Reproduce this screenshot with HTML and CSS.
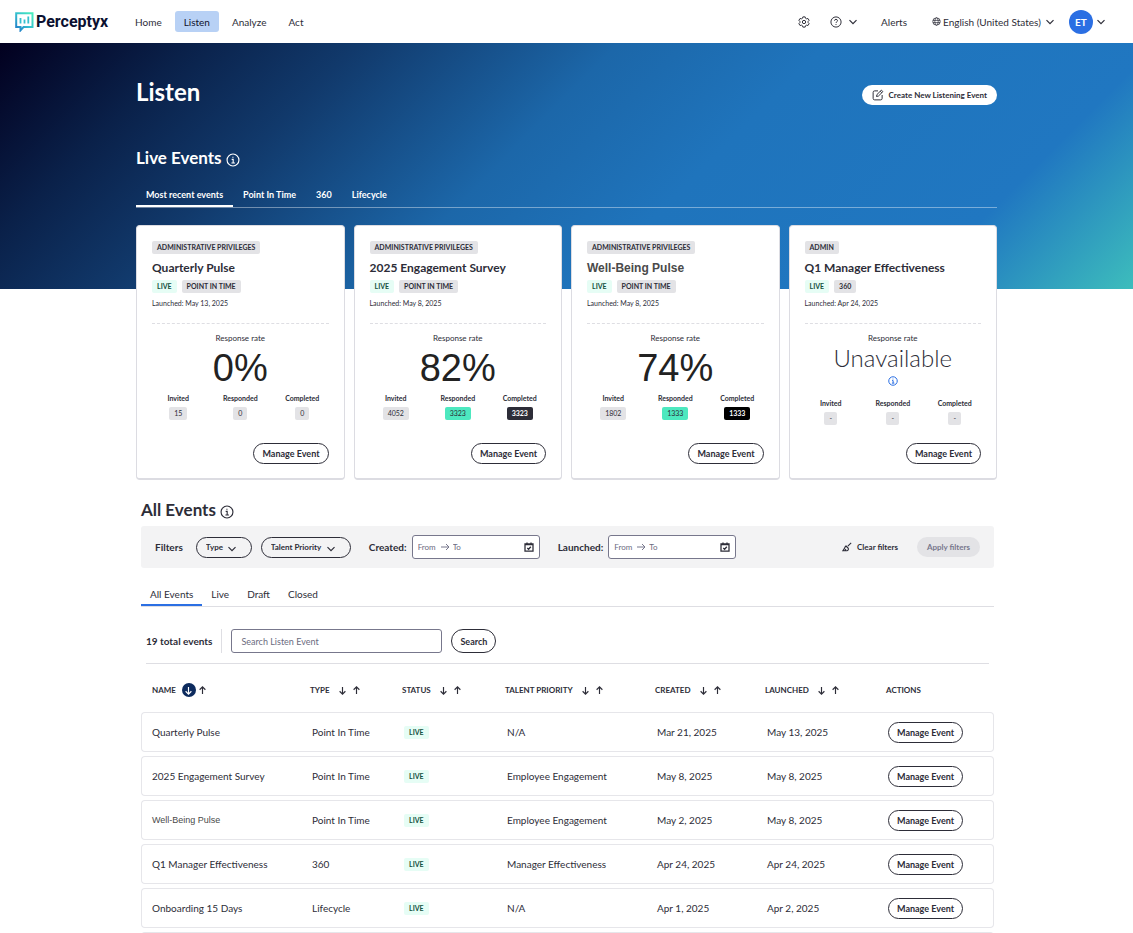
FILE: index.html
```html
<!DOCTYPE html>
<html lang="en">
<head>
    <meta charset="UTF-8">
    <meta name="viewport" content="width=device-width, initial-scale=1.0">
    <title>Perceptyx - Listen</title>
    <link rel="stylesheet" href="styles.css">
</head>
<body>
    <svg class="sprite" aria-hidden="true">
        <symbol id="chevron" viewBox="0 0 10 10"><path d="M1.5 3.2 5 6.7l3.5-3.5"/></symbol>
        <symbol id="info" viewBox="0 0 16 16"><circle cx="8" cy="8" r="6.8"/><path d="M6.5 7.3H8.2v4M6.2 11.4h4M7.9 4.2v1.3"/></symbol>
        <symbol id="arrow-down" viewBox="0 0 10 10"><path d="M5 1v8M1.8 5.8 5 9l3.2-3.2"/></symbol>
        <symbol id="arrow-up" viewBox="0 0 10 10"><path d="M5 9V1M1.8 4.2 5 1l3.2 3.2"/></symbol>
        <symbol id="arrow-right" viewBox="0 0 10 10"><path d="M1 5h8M6 2l3 3-3 3"/></symbol>
        <symbol id="calendar" viewBox="0 0 10 10"><path d="M1 2h8v7.2H1zM1 2.7h8M3 .5V2M7 .5V2M3.3 6l1.3 1.2 2.2-2.5"/></symbol>
    </svg>

    <header class="topbar">
        <a class="logo" href="#">
            <svg class="logo-mark" viewBox="0 0 19 20" aria-hidden="true">
                <defs>
                    <linearGradient id="logoGradient" x1="0" y1="1" x2="1" y2="0">
                        <stop offset="0" stop-color="#1f78c8"/>
                        <stop offset="0.5" stop-color="#35c0cf"/>
                        <stop offset="1" stop-color="#4aeebc"/>
                    </linearGradient>
                </defs>
                <path d="M5 15H1.200V1.300h16.300V15H8.500l-3 3.300V14" fill="none" stroke="url(#logoGradient)" stroke-width="2"/>
                <path d="M5.500 6v5.500M9.500 7.500v4M13.300 4.500v7" fill="none" stroke="#35c0cf" stroke-width="1.800"/>
            </svg>
            <span>Perceptyx</span>
        </a>
        <nav class="main-nav">
            <a href="#">Home</a>
            <a href="#" class="active">Listen</a>
            <a href="#">Analyze</a>
            <a href="#">Act</a>
        </nav>
        <div class="tools">
            <button class="icon-button settings" aria-label="Settings">
                <svg class="icon" viewBox="0 0 16 16"><path d="M6.500 1.200h3l.5 1.800 1.500.8 1.800-.5 1.500 2.500-1.300 1.400v1.600l1.300 1.400-1.500 2.500-1.800-.5-1.500.8-.5 1.800h-3L6 13l-1.500-.8-1.800.5-1.500-2.500 1.300-1.400V7.200L1.200 5.800l1.500-2.500 1.800.5L6 3z"/><circle cx="8" cy="8" r="2.200"/></svg>
            </button>
            <button class="icon-button help" aria-label="Help">
                <svg class="icon" viewBox="0 0 16 16"><circle cx="8" cy="8" r="6.800"/><path d="M6 6.300c0-2.600 4-2.500 4 0 0 1.500-2 1.500-2 3M8 10.800v1.200"/></svg>
                <svg class="icon chevron"><use href="#chevron"/></svg>
            </button>
            <a href="#" class="alerts">Alerts</a>
            <div class="language">
                <label for="language" aria-label="Language">
                    <svg class="icon globe" viewBox="0 0 16 16"><circle cx="8" cy="8" r="6.600"/><ellipse cx="8" cy="8" rx="3" ry="6.600"/><path d="M1.400 6h13.200M1.400 10h13.200"/></svg>
                </label>
                <select id="language">
                    <option>English (United States)</option>
                </select>
            </div>
            <button class="icon-button account" aria-label="Account">
                <span class="avatar">ET</span>
                <svg class="icon chevron"><use href="#chevron"/></svg>
            </button>
        </div>
    </header>

    <main>
        <section class="live">
            <div class="page-head">
                <h1>Listen</h1>
                <button class="create-button">
                    <svg class="icon" viewBox="0 0 16 16"><path d="M8 2.500H3.500a2 2 0 0 0-2 2v8a2 2 0 0 0 2 2h8a2 2 0 0 0 2-2V8M6 10l.6-2.600L12.500 1.500l2 2-5.900 5.900zM11 3l2 2"/></svg>
                    Create New Listening Event
                </button>
            </div>
            <h2>Live Events <svg class="icon info"><use href="#info"/></svg></h2>
            <nav class="tabs tabs-light">
                <a href="#" class="active">Most recent events</a>
                <a href="#">Point In Time</a>
                <a href="#">360</a>
                <a href="#">Lifecycle</a>
            </nav>

            <div class="cards">
                <article class="card">
                    <div class="tags"><span class="tag">ADMINISTRATIVE PRIVILEGES</span></div>
                    <h3>Quarterly Pulse</h3>
                    <div class="tags"><span class="tag tag-live">LIVE</span><span class="tag">POINT IN TIME</span></div>
                    <p class="launched">Launched: May 13, 2025</p>
                    <p class="rate-label">Response rate</p>
                    <p class="rate">0%</p>
                    <dl class="stats">
                        <div><dt>Invited</dt><dd>15</dd></div>
                        <div><dt>Responded</dt><dd>0</dd></div>
                        <div><dt>Completed</dt><dd>0</dd></div>
                    </dl>
                    <button class="pill">Manage Event</button>
                </article>
                <article class="card">
                    <div class="tags"><span class="tag">ADMINISTRATIVE PRIVILEGES</span></div>
                    <h3>2025 Engagement Survey</h3>
                    <div class="tags"><span class="tag tag-live">LIVE</span><span class="tag">POINT IN TIME</span></div>
                    <p class="launched">Launched: May 8, 2025</p>
                    <p class="rate-label">Response rate</p>
                    <p class="rate">82%</p>
                    <dl class="stats">
                        <div><dt>Invited</dt><dd>4052</dd></div>
                        <div><dt>Responded</dt><dd class="responded">3323</dd></div>
                        <div><dt>Completed</dt><dd class="completed">3323</dd></div>
                    </dl>
                    <button class="pill">Manage Event</button>
                </article>
                <article class="card">
                    <div class="tags"><span class="tag">ADMINISTRATIVE PRIVILEGES</span></div>
                    <h3 class="renamed">Well-Being Pulse</h3>
                    <div class="tags"><span class="tag tag-live">LIVE</span><span class="tag">POINT IN TIME</span></div>
                    <p class="launched">Launched: May 8, 2025</p>
                    <p class="rate-label">Response rate</p>
                    <p class="rate">74%</p>
                    <dl class="stats">
                        <div><dt>Invited</dt><dd>1802</dd></div>
                        <div><dt>Responded</dt><dd class="responded">1333</dd></div>
                        <div><dt>Completed</dt><dd class="completed black">1333</dd></div>
                    </dl>
                    <button class="pill">Manage Event</button>
                </article>
                <article class="card">
                    <div class="tags"><span class="tag">ADMIN</span></div>
                    <h3>Q1 Manager Effectiveness</h3>
                    <div class="tags"><span class="tag tag-live">LIVE</span><span class="tag">360</span></div>
                    <p class="launched">Launched: Apr 24, 2025</p>
                    <p class="rate-label">Response rate</p>
                    <p class="rate unavailable">Unavailable <svg class="icon"><use href="#info"/></svg></p>
                    <dl class="stats">
                        <div><dt>Invited</dt><dd>-</dd></div>
                        <div><dt>Responded</dt><dd>-</dd></div>
                        <div><dt>Completed</dt><dd>-</dd></div>
                    </dl>
                    <button class="pill">Manage Event</button>
                </article>
            </div>
        </section>

        <section class="all-events">
            <h2>All Events <svg class="icon info"><use href="#info"/></svg></h2>
            <form class="filters">
                <span class="filters-title">Filters</span>
                <select class="pill filter-select type-select" aria-label="Type"><option>Type</option></select>
                <select class="pill filter-select priority-select" aria-label="Talent Priority"><option>Talent Priority</option></select>
                <label for="createdFrom">Created:</label>
                <div class="date-range">
                    <input type="text" id="createdFrom" class="from" placeholder="From">
                    <svg class="icon arrow"><use href="#arrow-right"/></svg>
                    <input type="text" class="to" placeholder="To" aria-label="Created to">
                    <svg class="icon"><use href="#calendar"/></svg>
                </div>
                <label for="launchedFrom">Launched:</label>
                <div class="date-range">
                    <input type="text" id="launchedFrom" class="from" placeholder="From">
                    <svg class="icon arrow"><use href="#arrow-right"/></svg>
                    <input type="text" class="to" placeholder="To" aria-label="Launched to">
                    <svg class="icon"><use href="#calendar"/></svg>
                </div>
                <button type="reset" class="clear-button">
                    <svg class="icon" viewBox="0 0 12 12"><path d="M11 1 7 5M4.500 4.500l3 3M4.500 4.500C3.500 7 2.500 8.500 1 10.500h5c1.500-.6 2-1.800 1.500-3M3.500 10.300l1.200-1.800"/></svg>
                    Clear filters
                </button>
                <button type="button" class="apply-button" disabled>Apply filters</button>
            </form>

            <nav class="tabs tabs-dark">
                <a href="#" class="active">All Events</a>
                <a href="#">Live</a>
                <a href="#">Draft</a>
                <a href="#">Closed</a>
            </nav>

            <div class="search-row">
                <span class="total">19 total events</span>
                <input type="text" id="search" placeholder="Search Listen Event" aria-label="Search Listen Event">
                <button class="pill search-button">Search</button>
            </div>

            <table class="events">
                <colgroup>
                    <col class="col-name"><col class="col-type"><col class="col-status"><col class="col-priority"><col class="col-created"><col class="col-launched"><col>
                </colgroup>
                <thead>
                    <tr>
                        <th><div class="th">NAME <button class="sort selected" aria-label="Sort down"><svg class="icon"><use href="#arrow-down"/></svg></button><button class="sort" aria-label="Sort up"><svg class="icon"><use href="#arrow-up"/></svg></button></div></th>
                        <th><div class="th">TYPE <button class="sort" aria-label="Sort down"><svg class="icon"><use href="#arrow-down"/></svg></button><button class="sort" aria-label="Sort up"><svg class="icon"><use href="#arrow-up"/></svg></button></div></th>
                        <th><div class="th">STATUS <button class="sort" aria-label="Sort down"><svg class="icon"><use href="#arrow-down"/></svg></button><button class="sort" aria-label="Sort up"><svg class="icon"><use href="#arrow-up"/></svg></button></div></th>
                        <th><div class="th">TALENT PRIORITY <button class="sort" aria-label="Sort down"><svg class="icon"><use href="#arrow-down"/></svg></button><button class="sort" aria-label="Sort up"><svg class="icon"><use href="#arrow-up"/></svg></button></div></th>
                        <th><div class="th">CREATED <button class="sort" aria-label="Sort down"><svg class="icon"><use href="#arrow-down"/></svg></button><button class="sort" aria-label="Sort up"><svg class="icon"><use href="#arrow-up"/></svg></button></div></th>
                        <th><div class="th">LAUNCHED <button class="sort" aria-label="Sort down"><svg class="icon"><use href="#arrow-down"/></svg></button><button class="sort" aria-label="Sort up"><svg class="icon"><use href="#arrow-up"/></svg></button></div></th>
                        <th><div class="th">ACTIONS</div></th>
                    </tr>
                </thead>
                <tbody>
                    <tr>
                        <td>Quarterly Pulse</td>
                        <td>Point In Time</td>
                        <td><span class="tag tag-live">LIVE</span></td>
                        <td>N/A</td>
                        <td>Mar 21, 2025</td>
                        <td>May 13, 2025</td>
                        <td><button class="pill">Manage Event</button></td>
                    </tr>
                    <tr>
                        <td>2025 Engagement Survey</td>
                        <td>Point In Time</td>
                        <td><span class="tag tag-live">LIVE</span></td>
                        <td>Employee Engagement</td>
                        <td>May 8, 2025</td>
                        <td>May 8, 2025</td>
                        <td><button class="pill">Manage Event</button></td>
                    </tr>
                    <tr>
                        <td class="renamed">Well-Being Pulse</td>
                        <td>Point In Time</td>
                        <td><span class="tag tag-live">LIVE</span></td>
                        <td>Employee Engagement</td>
                        <td>May 2, 2025</td>
                        <td>May 8, 2025</td>
                        <td><button class="pill">Manage Event</button></td>
                    </tr>
                    <tr>
                        <td>Q1 Manager Effectiveness</td>
                        <td>360</td>
                        <td><span class="tag tag-live">LIVE</span></td>
                        <td>Manager Effectiveness</td>
                        <td>Apr 24, 2025</td>
                        <td>Apr 24, 2025</td>
                        <td><button class="pill">Manage Event</button></td>
                    </tr>
                    <tr>
                        <td>Onboarding 15 Days</td>
                        <td>Lifecycle</td>
                        <td><span class="tag tag-live">LIVE</span></td>
                        <td>N/A</td>
                        <td>Apr 1, 2025</td>
                        <td>Apr 2, 2025</td>
                        <td><button class="pill">Manage Event</button></td>
                    </tr>
                    <tr>
                        <td></td><td></td><td></td><td></td><td></td><td></td><td></td>
                    </tr>
                </tbody>
            </table>
        </section>
    </main>
</body>
</html>
```

FILE: styles.css
```css
* {
    box-sizing: border-box;
}
body {
    font-family: Lato, "Liberation Sans", sans-serif;
    font-size: 10px;
    line-height: 12px;
    color: #2d2d38;
    background-color: white;
    margin: 0;
    height: 100vh;
    overflow: hidden;
}
h1, h2, h3, p, dl, dd {
    margin: 0;
}
a {
    color: inherit;
    text-decoration: none;
}
button, input, select {
    font-family: inherit;
    font-size: inherit;
    color: inherit;
}
button {
    display: flex;
    align-items: center;
    justify-content: center;
    padding: 0;
    border: none;
    background: none;
    cursor: pointer;
}
.sprite {
    display: none;
}
.icon {
    display: block;
    width: 10px;
    height: 10px;
    flex: none;
    fill: none;
    stroke: currentColor;
    stroke-width: 1.3;
}
.icon-button .icon,
.create-button .icon {
    width: 12px;
    height: 12px;
}
.icon-button .chevron {
    width: 10px;
    height: 10px;
    stroke-width: 1.2;
}

/* Top bar */
.topbar {
    display: flex;
    align-items: center;
    height: 43px;
    padding: 0 27px 0 15px;
}
.logo {
    display: flex;
    align-items: center;
    gap: 2px;
    width: 111px;
    font-family: Roboto, sans-serif;
    font-size: 16px;
    font-weight: 700;
    color: #0b1030;
}
.logo-mark {
    width: 19px;
    height: 20px;
}
.main-nav {
    display: flex;
    gap: 4px;
}
.main-nav a {
    padding: 1px 9px 0;
    line-height: 20px;
    border-radius: 3px;
}
.main-nav .active {
    background-color: #b8d1f5;
    color: #11112b;
}
.tools {
    display: flex;
    align-items: center;
    margin-left: auto;
}
.help {
    gap: 6px;
    margin-left: 20px;
}
.alerts {
    margin-left: 23px;
}
.language {
    display: flex;
    align-items: center;
    gap: 2px;
    margin: 0 14px 0 25px;
}
.globe {
    width: 9px;
    height: 9px;
}
.language select {
    appearance: none;
    width: 112px;
    padding: 0;
    border: none;
    background: url("data:image/svg+xml,%3Csvg xmlns='http://www.w3.org/2000/svg' viewBox='0 0 10 10'%3E%3Cpath d='M1.500 3.200 5 6.700l3.500-3.500' fill='none' stroke='%232d2d38' stroke-width='1.200'/%3E%3C/svg%3E") right center / 10px no-repeat;
}
.account {
    gap: 3px;
}
.avatar {
    width: 24px;
    line-height: 24px;
    border-radius: 50%;
    background-color: #2b6fe3;
    color: white;
    font-weight: 700;
}

/* Live events */
.live {
    padding: 39px 136px 0;
    background: linear-gradient(135deg, #02001f 0%, #0a214a 14%, #11396b 26%, #1c67a9 45%, #1f74bc 60%, #2077c1 84%, #3dbdbc 100%) no-repeat;
    background-size: 100% 246px;
}
.page-head {
    display: flex;
    align-items: flex-start;
    justify-content: space-between;
}
h1 {
    font-size: 24px;
    line-height: 20px;
    color: white;
}
.create-button {
    gap: 5px;
    height: 20px;
    margin-top: 3px;
    padding: 0 10px;
    border-radius: 10px;
    background-color: white;
    font-size: 8px;
    font-weight: 700;
}
h2 {
    display: flex;
    align-items: center;
    gap: 4px;
    font-size: 17px;
    line-height: 20px;
}
.live h2 {
    margin-top: 43px;
    color: white;
}
.info {
    width: 14px;
    height: 14px;
    margin-top: 3px;
}
.tabs {
    display: flex;
    border-bottom: 1px solid #dedee3;
}
.tabs a {
    height: 18px;
    padding: 0 9px;
    border-bottom: 2px solid transparent;
}
.tabs-light {
    margin-top: 21px;
    border-color: rgba(255, 255, 255, 0.4);
    color: white;
    font-size: 9px;
    font-weight: 700;
}
.tabs-light a {
    padding: 0 10px;
}
.tabs-light .active {
    border-color: white;
}
.cards {
    display: grid;
    grid-template-columns: repeat(4, minmax(0, 1fr));
    gap: 9px;
    margin-top: 17px;
}
.card {
    display: flex;
    flex-direction: column;
    height: 255px;
    padding: 15px 15px 14px;
    border: 1px solid #dcdce2;
    border-bottom-width: 2px;
    border-radius: 4px;
    background-color: white;
}
.tags {
    display: flex;
    gap: 5px;
}
.tag {
    display: inline-block;
    padding: 0 5px;
    border-radius: 2px;
    background-color: #e3e3e6;
    font-size: 7px;
    font-weight: 700;
    line-height: 13px;
}
.tag-live {
    background-color: #e6fdf5;
    color: #14523f;
}
.card h3 {
    margin: 6px 0 4px;
    font-size: 12px;
    line-height: 16px;
}
.card .renamed {
    font-family: "Liberation Sans", sans-serif;
    color: #4a4a4a;
}
.launched {
    margin-top: 5px;
    padding-bottom: 15px;
    border-bottom: 1px dashed #dedee3;
    font-size: 7px;
    line-height: 10px;
}
.rate-label {
    margin-top: 9px;
    font-size: 8px;
    line-height: 10px;
    text-align: center;
}
.rate {
    margin-top: 3px;
    height: 44px;
    font-family: "Liberation Sans", sans-serif;
    font-size: 38px;
    line-height: 44px;
    text-align: center;
    color: #222;
}
.unavailable {
    margin-top: 1px;
    height: 51px;
    font-family: Lato, sans-serif;
    font-size: 24px;
    font-weight: 300;
    line-height: 28px;
    color: #2d2d38;
}
.unavailable .icon {
    margin: 4px auto 0;
    color: #2b6fe3;
    stroke-width: 1.6;
}
.stats {
    display: grid;
    grid-template-columns: repeat(3, 62px);
    justify-content: center;
    margin-top: 3px;
    font-size: 7px;
    line-height: 10px;
    text-align: center;
}
.stats dt {
    font-weight: 700;
}
.stats dd {
    display: inline-block;
    margin-top: 4px;
    padding: 0 5px;
    border-radius: 2px;
    background-color: #e3e3e6;
    line-height: 13px;
}
.stats .responded {
    background-color: #4de8bf;
}
.stats .completed {
    background-color: #2d2d38;
    color: white;
    font-weight: 700;
}
.stats .black {
    background-color: black;
}
.pill {
    height: 21px;
    padding: 0 8px;
    border: 1px solid #2d2d38;
    border-radius: 12px;
    background-color: white;
    font-size: 9px;
    font-weight: 700;
}
.card .pill {
    align-self: flex-end;
    margin-top: auto;
}

/* All events */
.all-events {
    padding: 20px 139px 0 141px;
}
.filters {
    display: flex;
    align-items: center;
    height: 42px;
    margin-top: 6px;
    padding: 0 14px;
    border-radius: 3px;
    background-color: #f3f3f4;
}
.filters-title {
    margin-right: 13px;
    font-weight: 700;
}
.filter-select {
    appearance: none;
    margin-right: 9px;
    padding: 0 9px;
    background: url("data:image/svg+xml,%3Csvg xmlns='http://www.w3.org/2000/svg' viewBox='0 0 10 10'%3E%3Cpath d='M1.500 3.200 5 6.700l3.500-3.500' fill='none' stroke='%232d2d38' stroke-width='1.200'/%3E%3C/svg%3E") right 14px top 6px / 10px no-repeat;
    font-size: 8px;
}
.type-select {
    width: 56px;
}
.priority-select {
    width: 90px;
}
.filters label {
    margin: 0 5px 0 9px;
    font-weight: 700;
}
.date-range {
    display: flex;
    align-items: center;
    width: 128px;
    height: 24px;
    margin-right: 9px;
    padding: 0 5px;
    border: 1px solid #77778c;
    border-radius: 3px;
    background-color: white;
    font-size: 8px;
}
.date-range input {
    padding: 0;
    border: none;
    background: none;
}
.date-range .from {
    width: 22px;
}
.date-range .to {
    flex: 1;
    min-width: 0;
    margin-left: 3px;
}
.date-range .arrow {
    color: #77778c;
    stroke-width: 1;
}
::placeholder {
    color: #6b6b80;
}
.clear-button {
    gap: 5px;
    margin-left: auto;
    font-size: 8px;
    font-weight: 700;
}
.apply-button {
    height: 20px;
    margin-left: 19px;
    padding: 0 10px;
    border-radius: 10px;
    background-color: #e3e3e6;
    color: #77778c;
    font-size: 8px;
    font-weight: 700;
}
.tabs-dark {
    margin-top: 20px;
}
.tabs-dark .active {
    border-color: #2b6fe3;
}
.search-row {
    display: flex;
    align-items: center;
    margin: 0 5px;
    padding: 22px 0 10px;
    border-bottom: 1px solid #dedee3;
}
.total {
    padding-right: 9px;
    border-right: 1px solid #dedee3;
    font-weight: 700;
    line-height: 24px;
}
.search-row input {
    width: 211px;
    height: 24px;
    margin: 0 9px;
    padding: 0 9px;
    border: 1px solid #77778c;
    border-radius: 3px;
    font-size: 9px;
}
.search-button {
    height: 24px;
}
.events {
    width: 100%;
    margin-top: 4px;
    table-layout: fixed;
    border-collapse: separate;
    border-spacing: 0 4px;
}
.col-name {
    width: 160px;
}
.col-type {
    width: 92px;
}
.col-status {
    width: 103px;
}
.col-priority {
    width: 150px;
}
.col-created {
    width: 110px;
}
.col-launched {
    width: 121px;
}
.events th {
    height: 36px;
    padding: 0 0 0 9px;
    font-size: 8px;
    text-align: left;
}
.th {
    display: flex;
    align-items: center;
}
.sort {
    width: 14px;
    height: 14px;
    border-radius: 50%;
}
.sort:first-of-type {
    margin-left: 6px;
}
.sort .icon {
    width: 9px;
    height: 9px;
}
.selected {
    background-color: #0d2b5e;
    color: white;
}
.events td {
    height: 40px;
    padding: 0 0 0 11px;
    border: solid #e6e6ea;
    border-width: 1px 0;
}
.events th:first-child {
    padding-left: 11px;
}
.events td:first-child {
    padding-left: 10px;
    border-left-width: 1px;
    border-radius: 4px 0 0 4px;
}
.events td:last-child {
    border-right-width: 1px;
    border-radius: 0 4px 4px 0;
}
.events .renamed {
    font-family: "Liberation Sans", sans-serif;
    font-size: 9px;
    color: #4a4a4a;
}
```
